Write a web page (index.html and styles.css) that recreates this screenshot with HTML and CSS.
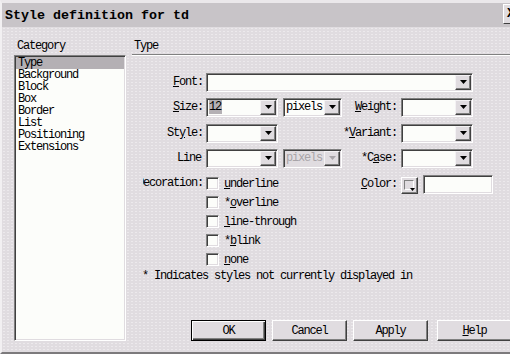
FILE: index.html
```html
<!DOCTYPE html>
<html>
<head>
<meta charset="utf-8">
<link rel="stylesheet" href="styles.css">
</head>
<body>
<div class="dialog">
  <div class="titlebar">
    <span class="title">Style definition for td</span>
    <span class="close">X</span>
  </div>
  <div class="body">
    <div class="cat-col">
      <div class="cat-label">Category</div>
      <ul class="listbox">
        <li class="selected">Type</li>
        <li>Background</li>
        <li>Block</li>
        <li>Box</li>
        <li>Border</li>
        <li>List</li>
        <li>Positioning</li>
        <li>Extensions</li>
      </ul>
    </div>
    <div class="main">
      <div class="head">Type</div>
      <div class="form">
        <div class="row">
          <div class="lbl"><span><u>F</u>ont:</span></div>
          <div class="sel w-font"><span class="val"></span><span class="arrow"><svg width="7" height="4" viewBox="0 0 7 4"><path d="M0 0h7L3.5 4z"/></svg></span></div>
        </div>
        <div class="row">
          <div class="lbl"><span><u>S</u>ize:</span></div>
          <div class="sel w-sm"><span class="val"><span class="hl">12</span></span><span class="arrow"><svg width="7" height="4" viewBox="0 0 7 4"><path d="M0 0h7L3.5 4z"/></svg></span></div>
          <div class="sel w-unit"><span class="val">pixels</span><span class="arrow"><svg width="7" height="4" viewBox="0 0 7 4"><path d="M0 0h7L3.5 4z"/></svg></span></div>
          <div class="lbl2"><span><u>W</u>eight:</span></div>
          <div class="sel w-sm"><span class="val"></span><span class="arrow"><svg width="7" height="4" viewBox="0 0 7 4"><path d="M0 0h7L3.5 4z"/></svg></span></div>
        </div>
        <div class="row row-style">
          <div class="lbl"><span>St<u>y</u>le:</span></div>
          <div class="sel w-sm"><span class="val"></span><span class="arrow"><svg width="7" height="4" viewBox="0 0 7 4"><path d="M0 0h7L3.5 4z"/></svg></span></div>
          <div class="unit-gap"></div>
          <div class="lbl2"><span>*<u>V</u>ariant:</span></div>
          <div class="sel w-sm"><span class="val"></span><span class="arrow"><svg width="7" height="4" viewBox="0 0 7 4"><path d="M0 0h7L3.5 4z"/></svg></span></div>
        </div>
        <div class="row">
          <div class="lbl"><span class="pad">Line</span></div>
          <div class="sel w-sm"><span class="val"></span><span class="arrow"><svg width="7" height="4" viewBox="0 0 7 4"><path d="M0 0h7L3.5 4z"/></svg></span></div>
          <div class="sel w-unit disabled"><span class="val">pixels</span><span class="arrow"><svg width="7" height="4" viewBox="0 0 7 4"><path d="M0 0h7L3.5 4z"/></svg></span></div>
          <div class="lbl2"><span>*C<u>a</u>se:</span></div>
          <div class="sel w-sm"><span class="val"></span><span class="arrow"><svg width="7" height="4" viewBox="0 0 7 4"><path d="M0 0h7L3.5 4z"/></svg></span></div>
        </div>
        <div class="deco">
          <div class="lbl lbl-top"><span>Decoration:</span></div>
          <div class="checks">
            <div class="check"><span class="cb"></span><span><u>u</u>nderline</span></div>
            <div class="check"><span class="cb"></span><span>*<u>o</u>verline</span></div>
            <div class="check"><span class="cb"></span><span><u>l</u>ine-through</span></div>
            <div class="check"><span class="cb"></span><span>*<u>b</u>link</span></div>
            <div class="check"><span class="cb"></span><span><u>n</u>one</span></div>
          </div>
          <div class="lbl2 lbl-color"><span><u>C</u>olor:</span></div>
          <div class="colorbtn"><span class="swatch"></span><svg class="mini" width="5" height="3" viewBox="0 0 5 3"><path d="M0 0h5L2.5 3z"/></svg></div>
          <div class="textbox"></div>
        </div>
      </div>
      <div class="note">* Indicates styles not currently displayed in</div>
      <div class="buttons">
        <div class="btn default"><span class="btn-in">OK</span></div>
        <div class="btn"><span class="btn-in">Cancel</span></div>
        <div class="btn"><span class="btn-in">Apply</span></div>
        <div class="btn help"><span class="btn-in"><u>H</u>elp</span></div>
      </div>
    </div>
  </div>
</div>
</body>
</html>
```
FILE: styles.css
```css
* { box-sizing: border-box; }
html, body { margin: 0; padding: 0; }
body {
  width: 510px;
  height: 354px;
  overflow: hidden;
  background: #e0dce0;
  font-family: "Liberation Mono", "DejaVu Sans Mono", monospace;
  font-size: 12px;
  letter-spacing: -1.2px;
  color: #000;
}
u { text-decoration: underline; text-underline-offset: 1px; }

.dialog {
  width: 526px;
  height: 354px;
  background-color: #e0dce0;
  background-image: radial-gradient(circle, #ece9ec 0.7px, transparent 0.8px);
  background-size: 4px 3px;
  border-top: 3px solid #ebe8eb;
  border-left: 2px solid #f2f0f2;
  border-bottom: 2px solid #7c7a7c;
}

.titlebar {
  height: 24px;
  background-color: #c8c4c8;
  display: flex;
  align-items: center;
  padding-left: 3px;
  padding-right: 2px;
}
.title {
  font-weight: bold;
  font-size: 13.33px;
  letter-spacing: 0;
  padding-top: 1px;
}
.close {
  margin-left: auto;
  align-self: flex-start;
  margin-top: 1px;
  width: 21px;
  height: 20px;
  background: #e0dce0;
  border: 1px solid;
  border-color: #fff #404040 #404040 #fff;
  font-weight: bold;
  font-size: 13px;
  letter-spacing: 0;
  line-height: 18px;
  padding-left: 3px;
}

.body {
  height: 325px;
  display: flex;
  padding-left: 12px;
}

.cat-col {
  width: 112px;
  padding-top: 13px;
}
.cat-label {
  height: 12px;
  line-height: 12px;
  padding-left: 3px;
  margin-bottom: 3px;
}
.listbox {
  list-style: none;
  margin: 0;
  padding: 1px 0 0 0;
  height: 286px;
  background: #fcfdfa;
  border: 1px solid;
  border-color: #808080 #fff #fff #808080;
  box-shadow: inset 1px 1px 0 #404040, inset -1px -1px 0 #e0dce0;
}
.listbox li {
  height: 12px;
  line-height: 12px;
  padding-left: 2px;
  margin: 0 1px;
}
.listbox li.selected { background: #b4b0b4; }

.main {
  flex: 1;
  margin-left: 6px;
  padding-top: 13px;
}
.head {
  height: 15px;
  line-height: 12px;
  padding-left: 2px;
  padding-bottom: 2px;
  border-bottom: 1px solid #808080;
  box-shadow: 0 1px 0 #fff;
}

.form {
  margin-top: 18px;
  margin-left: 11px;
  display: flex;
  flex-direction: column;
  gap: 6px;
}
.row {
  display: flex;
  align-items: center;
  height: 19px;
}
.row-style { margin-top: 1px; }
.lbl {
  width: 60px;
  margin-right: 3px;
  display: flex;
  justify-content: flex-end;
  overflow: hidden;
  white-space: nowrap;
  line-height: 19px;
}
.lbl .pad { padding-right: 2px; }
.lbl2 {
  width: 56px;
  margin-right: 3px;
  padding-right: 1px;
  display: flex;
  justify-content: flex-end;
  white-space: nowrap;
  line-height: 19px;
}
.unit-gap { width: 64px; }

.sel {
  height: 19px;
  background: #fcfdfa;
  border: 1px solid;
  border-color: #808080 #fff #fff #808080;
  box-shadow: inset 1px 1px 0 #404040, inset -1px -1px 0 #e0dce0;
  display: flex;
  align-items: center;
  padding: 1px;
}
.w-font { width: 267px; }
.w-sm { width: 72px; }
.w-unit { width: 59px; margin-left: 5px; }
.val {
  flex: 1;
  padding-left: 1px;
  white-space: nowrap;
  overflow: hidden;
  line-height: 15px;
}
.hl { background: #b4b0b4; padding: 0 1px 0 0; }
.arrow {
  width: 16px;
  height: 15px;
  background: #e0dce0;
  border: 1px solid;
  border-color: #f4f2f4 #404040 #404040 #f4f2f4;
  box-shadow: inset -1px -1px 0 #808080;
  display: flex;
  align-items: center;
  justify-content: center;
  padding-bottom: 1px;
}
.arrow svg { display: block; fill: #000; }
.disabled { background: #e0dce0; }
.disabled .val { color: #a8a4a8; }
.disabled .arrow svg { fill: #a8a4a8; }

.deco {
  display: flex;
  align-items: flex-start;
}
.lbl-top { height: 19px; }
.checks {
  width: 136px;
  display: flex;
  flex-direction: column;
}
.check {
  height: 19px;
  display: flex;
  align-items: center;
  white-space: nowrap;
}
.cb {
  width: 13px;
  height: 13px;
  margin-right: 5px;
  background: #fcfdfa;
  border: 1px solid;
  border-color: #808080 #fff #fff #808080;
  box-shadow: inset 1px 1px 0 #404040, inset -1px -1px 0 #e0dce0;
  flex: none;
}
.lbl-color { margin-top: 1px; }
.colorbtn {
  width: 17px;
  height: 17px;
  margin-top: 3px;
  margin-right: 5px;
  border: 1px solid;
  border-color: #fff #404040 #404040 #fff;
  box-shadow: inset -1px -1px 0 #808080;
  background: #e0dce0;
  position: relative;
  padding: 2px;
}
.swatch {
  display: block;
  width: 10px;
  height: 10px;
  border: 1px solid;
  border-color: #808080 #fff #fff #808080;
}
.mini {
  position: absolute;
  right: 2px;
  bottom: 2px;
  display: block;
  fill: #000;
}
.textbox {
  width: 70px;
  height: 19px;
  margin-top: 1px;
  background: #fcfdfa;
  border: 1px solid;
  border-color: #808080 #fff #fff #808080;
  box-shadow: inset 1px 1px 0 #404040, inset -1px -1px 0 #e0dce0;
}

.note {
  margin-left: 10px;
  margin-top: 1px;
  height: 12px;
  line-height: 12px;
  white-space: nowrap;
}

.buttons {
  display: flex;
  gap: 6px;
  margin-top: 38px;
  margin-left: 59px;
}
.btn {
  width: 75px;
  height: 21px;
  flex: none;
  background: #e0dce0;
  border: 1px solid;
  border-color: #fff #404040 #404040 #fff;
  box-shadow: inset -1px -1px 0 #808080;
  display: flex;
  align-items: center;
  justify-content: center;
}
.btn.default {
  border: 1px solid #000;
  box-shadow: inset 1px 1px 0 #fff, inset -1px -1px 0 #404040, inset -2px -2px 0 #808080;
}
.btn.help { margin-left: 3px; }
.btn-in { line-height: 12px; }
```
